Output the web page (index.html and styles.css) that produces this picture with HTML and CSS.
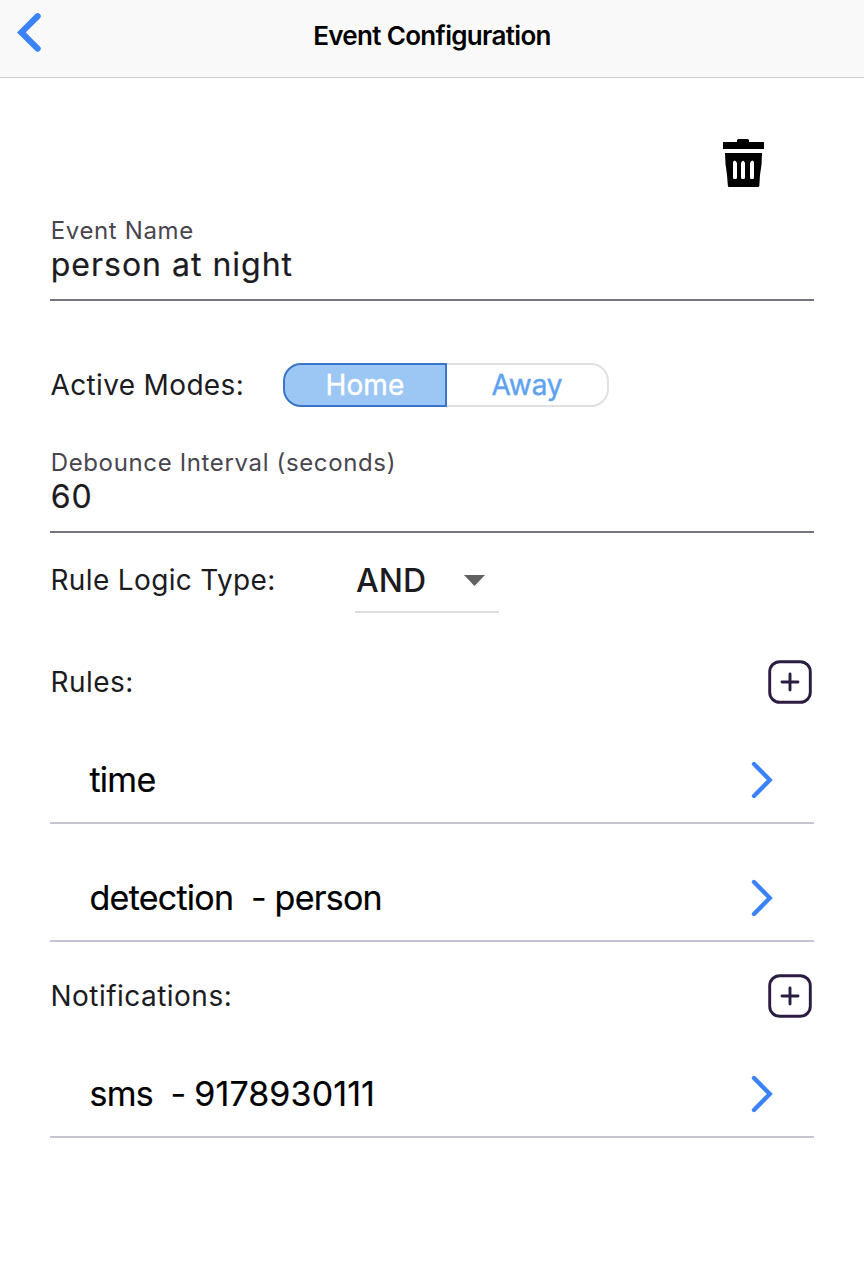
FILE: index.html
```html
<!DOCTYPE html>
<html lang="en">
<head>
<meta charset="utf-8">
<title>Event Configuration</title>
<link rel="stylesheet" href="styles.css">
</head>
<body>
<header class="navbar">
  <svg class="back" width="30" height="44" viewBox="0 0 30 44"><path d="M23.6 6.2 L7.4 22.4 L23.6 38.6" fill="none" stroke="#3b82f6" stroke-width="6.2" stroke-linecap="round" stroke-linejoin="miter"/></svg>
  <h1 class="title">Event Configuration</h1>
</header>
<main class="content">
  <div class="toolbar">
    <svg class="trash" width="41" height="48" viewBox="0 0 41 48"><path d="M0 3H14V1.5Q14 0 15.5 0H24.5Q26 0 26 1.5V3H41V10H0Z"/><path fill-rule="evenodd" d="M2 14H39L38.6 25L37 36L36.3 47Q36 48 35 48H6Q5 48 4.9 47L4 36L2.5 25Z M10 23V38.5Q10 40 11.5 40H12.5Q14 40 14 38.5V24Q12 19.5 10 23Z M18 24V38.5Q18 40 19.5 40H20.5Q22 40 22 38.5V24Q20 19.5 18 24Z M27 24V38.5Q27 40 28.5 40H29.5Q31 40 31 38.5V23Q29 19.5 27 24Z"/></svg>
  </div>
  <div class="field">
    <span class="caption">Event Name</span>
    <span class="value">person at night</span>
  </div>
  <div class="modes">
    <span class="label">Active Modes:</span>
    <div class="segments">
      <span class="segment selected">Home</span>
      <span class="segment">Away</span>
    </div>
  </div>
  <div class="field">
    <span class="caption">Debounce Interval (seconds)</span>
    <span class="value">60</span>
  </div>
  <div class="logic">
    <span class="label">Rule Logic Type:</span>
    <div class="select"><span>AND</span><svg class="arrow" width="21" height="11" viewBox="0 0 21 11"><path d="M0 0H21L10.5 11Z" fill="#616161"/></svg></div>
  </div>
  <section>
    <div class="section-head">
      <span class="label">Rules:</span>
      <svg class="plus" width="44" height="44" viewBox="0 0 44 44"><rect x="1.7" y="1.7" width="40.6" height="40.6" rx="10"/><path d="M22 14V30M14 22H30"/></svg>
    </div>
    <div class="item"><span>time</span><svg class="chevron" width="22" height="38" viewBox="0 0 22 38"><path d="M3 3L18.8 19L3 35"/></svg></div>
    <div class="item"><span>detection&nbsp; - person</span><svg class="chevron" width="22" height="38" viewBox="0 0 22 38"><path d="M3 3L18.8 19L3 35"/></svg></div>
  </section>
  <section>
    <div class="section-head">
      <span class="label">Notifications:</span>
      <svg class="plus" width="44" height="44" viewBox="0 0 44 44"><rect x="1.7" y="1.7" width="40.6" height="40.6" rx="10"/><path d="M22 14V30M14 22H30"/></svg>
    </div>
    <div class="item"><span>sms&nbsp; - <span class="phone">9178930111</span></span><svg class="chevron" width="22" height="38" viewBox="0 0 22 38"><path d="M3 3L18.8 19L3 35"/></svg></div>
  </section>
</main>
</body>
</html>
```

FILE: styles.css
```css
* { box-sizing: border-box; }
body { margin: 0; background: #fff; font-family: Inter, "Liberation Sans", sans-serif; color: #1c1b1f; min-height: 1268px; }
svg { display: block; flex: none; }
span { white-space: pre; }
.navbar { height: 78px; background: #f9f9f9; border-bottom: 1px solid #d0d0d2; display: grid; grid-template-columns: 60px 1fr 60px; }
.back { margin: 10px 0 0 14px; }
.title { margin: 20px 0 0; font-size: 26px; line-height: 32px; font-weight: 600; color: #000; text-align: center; letter-spacing: -0.67px; }
.content { padding: 0 50px; }
.toolbar { height: 134px; padding: 61px 50px 0 0; display: flex; justify-content: flex-end; }
.field { height: 89px; padding: 4px 0 0 0.7px; border-bottom: 2px solid #77757d; display: flex; flex-direction: column; }
.caption { font-size: 24px; line-height: 30px; color: #49454f; letter-spacing: 0.64px; }
.value { font-size: 32px; line-height: 38px; letter-spacing: 1px; -webkit-text-stroke: 0.2px currentColor; }
.label { font-size: 28px; line-height: 36px; letter-spacing: 0.35px; padding-left: 0.5px; }
.modes { height: 143px; padding-top: 62px; display: grid; grid-template-columns: 233px 326px; align-items: start; }
.modes .label { line-height: 44px; }
.segments { display: grid; grid-template-columns: 164px 162px; height: 44px; }
.segment { display: flex; align-items: center; justify-content: center; font-size: 28px; letter-spacing: -0.1px; color: #5ea2f0; border: 2px solid #e0e0e0; border-left: 0; border-radius: 0 18px 18px 0; -webkit-text-stroke: 0.4px currentColor; }
.segment.selected { color: #fff; background: #9cc7f5; border: 2px solid #3b74cb; border-radius: 18px 0 0 18px; letter-spacing: 0.2px; }
.logic { height: 95px; padding-top: 16px; display: grid; grid-template-columns: 305px 144px; align-items: start; }
.logic .label { line-height: 62px; }
.select { height: 64px; border-bottom: 2px solid #dedede; display: flex; align-items: center; justify-content: space-between; padding: 0 14px 0 1px; font-size: 32px; font-weight: 500; }
.section-head { height: 78px; padding: 32px 2px 0 0; display: flex; align-items: flex-start; justify-content: space-between; }
.section-head .label { line-height: 44px; letter-spacing: 0.47px; }
.plus { fill: none; stroke: #2b1d42; stroke-width: 2.9; stroke-linecap: round; }
.item { height: 118px; border-bottom: 2px solid #c8c3d2; padding: 31px 41px 0 39.5px; display: flex; align-items: center; justify-content: space-between; font-size: 34px; letter-spacing: -0.75px; color: #000; -webkit-text-stroke: 0.2px currentColor; }
.phone { letter-spacing: 0.1px; }
.chevron { fill: none; stroke: #3b82f6; stroke-width: 4.3; stroke-linecap: round; }
```
